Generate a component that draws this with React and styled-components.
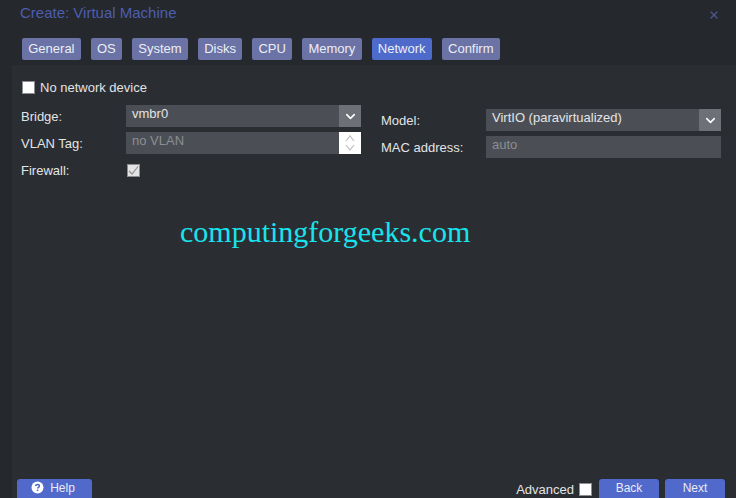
import React from 'react';
import styled, { createGlobalStyle } from 'styled-components';
import { ChevronDown, X } from 'lucide-react';

const GlobalStyle = createGlobalStyle`
  html, body {
    margin: 0;
    padding: 0;
    background: #25282c;
  }
`;

const Window = styled.div`
  position: relative;
  display: flex;
  flex-direction: column;
  width: 736px;
  height: 498px;
  overflow: hidden;
  background: #25282c;
  color: #e3e4e6;
  font-family: "Liberation Sans", Arial, sans-serif;
  font-size: 13px;
`;

const Header = styled.div`
  display: flex;
  justify-content: space-between;
  align-items: center;
  height: 26px;
  padding: 0 16px 0 20px;
`;

const Title = styled.div`
  margin-bottom: 2px;
  color: #4e5eae;
  font-size: 15px;
`;

const Close = styled.div`
  display: flex;
  margin-top: 4px;
  color: #4f5590;
`;

const Tabs = styled.div`
  display: flex;
  gap: 10px;
  height: 39px;
  padding: 12px 0 0 22px;
  box-sizing: border-box;
`;

const Tab = styled.div`
  height: 22px;
  padding: 0 6.25px;
  line-height: 21px;
  border-radius: 2px;
  background: ${p => (p.$active ? '#4e6bcb' : '#6a72a6')};
  color: #eceef4;
`;

const Panel = styled.div`
  flex: 1;
  display: flex;
  flex-direction: column;
  margin-left: 12px;
  background: #2a2d31;
`;

const Form = styled.div`
  flex: 1;
  display: grid;
  grid-template-columns: 340px 340px;
  gap: 20px;
  align-content: start;
  padding: 13px 0 0 9px;
`;

const Column = styled.div`
  display: flex;
  flex-direction: column;
  gap: 5px;
  padding-top: ${p => p.$top || 0}px;
`;

const Row = styled.div`
  display: flex;
  align-items: center;
  height: 22px;
`;

const CheckRow = styled(Row)`
  gap: 5px;
  height: 18px;
  margin-bottom: 4px;
`;

const Label = styled.div`
  width: 105px;
  padding-top: 1px;
  flex-shrink: 0;
`;

const Field = styled.div`
  flex: 1;
  display: flex;
  height: 22px;
  background: #4b4f55;
`;

const FieldText = styled.div`
  flex: 1;
  padding-left: 6px;
  line-height: 17px;
  color: ${p => (p.$muted ? '#8b8e93' : '#e3e4e6')};
`;

const Trigger = styled.div`
  display: flex;
  align-items: center;
  justify-content: center;
  width: 22px;
  background: #6d7177;
  color: #fff;
`;

const Spinner = styled.div`
  display: flex;
  align-items: center;
  justify-content: center;
  width: 22px;
  background: #fff;
`;

const Box = styled.div`
  display: flex;
  align-items: center;
  justify-content: center;
  box-sizing: border-box;
  width: 13px;
  height: 13px;
  margin-left: 1px;
  border: 1px solid #8a8d92;
  background: ${p => (p.$dim ? '#e4e4e4' : '#fff')};
`;

const Footer = styled.div`
  display: flex;
  align-items: flex-end;
  justify-content: space-between;
  height: 20px;
  padding: 0 11px 0 5px;
`;

const FooterRight = styled.div`
  display: flex;
  align-items: flex-end;
  gap: 6px;
`;

const Button = styled.div`
  display: flex;
  align-items: center;
  justify-content: center;
  gap: 6px;
  width: ${p => p.$width}px;
  height: 19px;
  padding-bottom: 2px;
  padding-right: ${p => p.$shift || 0}px;
  box-sizing: border-box;
  border-radius: 3px 3px 0 0;
  background: #5069cb;
  color: #e8ebf6;
  font-size: 12px;
`;

const Advanced = styled.div`
  display: flex;
  align-items: center;
  gap: 4px;
  height: 18px;
  margin-right: 1px;
  font-size: 13px;
`;

const Watermark = styled.div`
  position: absolute;
  left: 180px;
  top: 215px;
  color: #19e3ee;
  font-family: "Liberation Serif", "Times New Roman", serif;
  font-size: 30px;
  white-space: nowrap;
`;

const tabs = ['General', 'OS', 'System', 'Disks', 'CPU', 'Memory', 'Network', 'Confirm'];

function HelpIcon() {
  return (
    <svg width="13" height="13" viewBox="0 0 13 13">
      <circle cx="6.5" cy="6.5" r="6" fill="#fff" />
      <path d="M4.6 5.1c.1-1.1.9-1.7 1.9-1.7 1.1 0 1.9.6 1.9 1.6 0 .8-.5 1.1-1 1.5-.4.3-.8.5-.8 1.1" fill="none" stroke="#5069cb" strokeWidth="1.5" />
      <rect x="5.8" y="8.6" width="1.5" height="1.5" fill="#5069cb" />
    </svg>
  );
}

function SpinArrows() {
  return (
    <svg width="10" height="18" viewBox="0 0 10 18">
      <path d="M1 7 5 2 9 7M1 11 5 16 9 11" fill="none" stroke="#bcbcbc" strokeWidth="1.1" />
    </svg>
  );
}

export default function App() {
  return (
    <Window>
      <GlobalStyle />
      <Header>
        <Title>Create: Virtual Machine</Title>
        <Close><X size={12} strokeWidth={2.5} /></Close>
      </Header>
      <Tabs>
        {tabs.map(t => <Tab key={t} $active={t === 'Network'}>{t}</Tab>)}
      </Tabs>
      <Panel>
        <Form>
          <Column>
            <CheckRow><Box />No network device</CheckRow>
            <Row>
              <Label>Bridge:</Label>
              <Field>
                <FieldText>vmbr0</FieldText>
                <Trigger><ChevronDown size={15} strokeWidth={2.5} /></Trigger>
              </Field>
            </Row>
            <Row>
              <Label>VLAN Tag:</Label>
              <Field>
                <FieldText $muted>no VLAN</FieldText>
                <Spinner><SpinArrows /></Spinner>
              </Field>
            </Row>
            <Row>
              <Label>Firewall:</Label>
              <Box $dim>
                <svg width="11" height="11" viewBox="0 0 11 11">
                  <path d="M1 6 4 9 10 1.5" fill="none" stroke="#8f9296" strokeWidth="1.2" />
                </svg>
              </Box>
            </Row>
          </Column>
          <Column $top={31}>
            <Row>
              <Label>Model:</Label>
              <Field>
                <FieldText>VirtIO (paravirtualized)</FieldText>
                <Trigger><ChevronDown size={15} strokeWidth={2.5} /></Trigger>
              </Field>
            </Row>
            <Row>
              <Label>MAC address:</Label>
              <Field>
                <FieldText $muted>auto</FieldText>
              </Field>
            </Row>
          </Column>
        </Form>
        <Footer>
          <Button $width={75} $shift={3}><HelpIcon />Help</Button>
          <FooterRight>
            <Advanced>Advanced<Box /></Advanced>
            <Button $width={60}>Back</Button>
            <Button $width={60}>Next</Button>
          </FooterRight>
        </Footer>
      </Panel>
      <Watermark>computingforgeeks.com</Watermark>
    </Window>
  );
}
